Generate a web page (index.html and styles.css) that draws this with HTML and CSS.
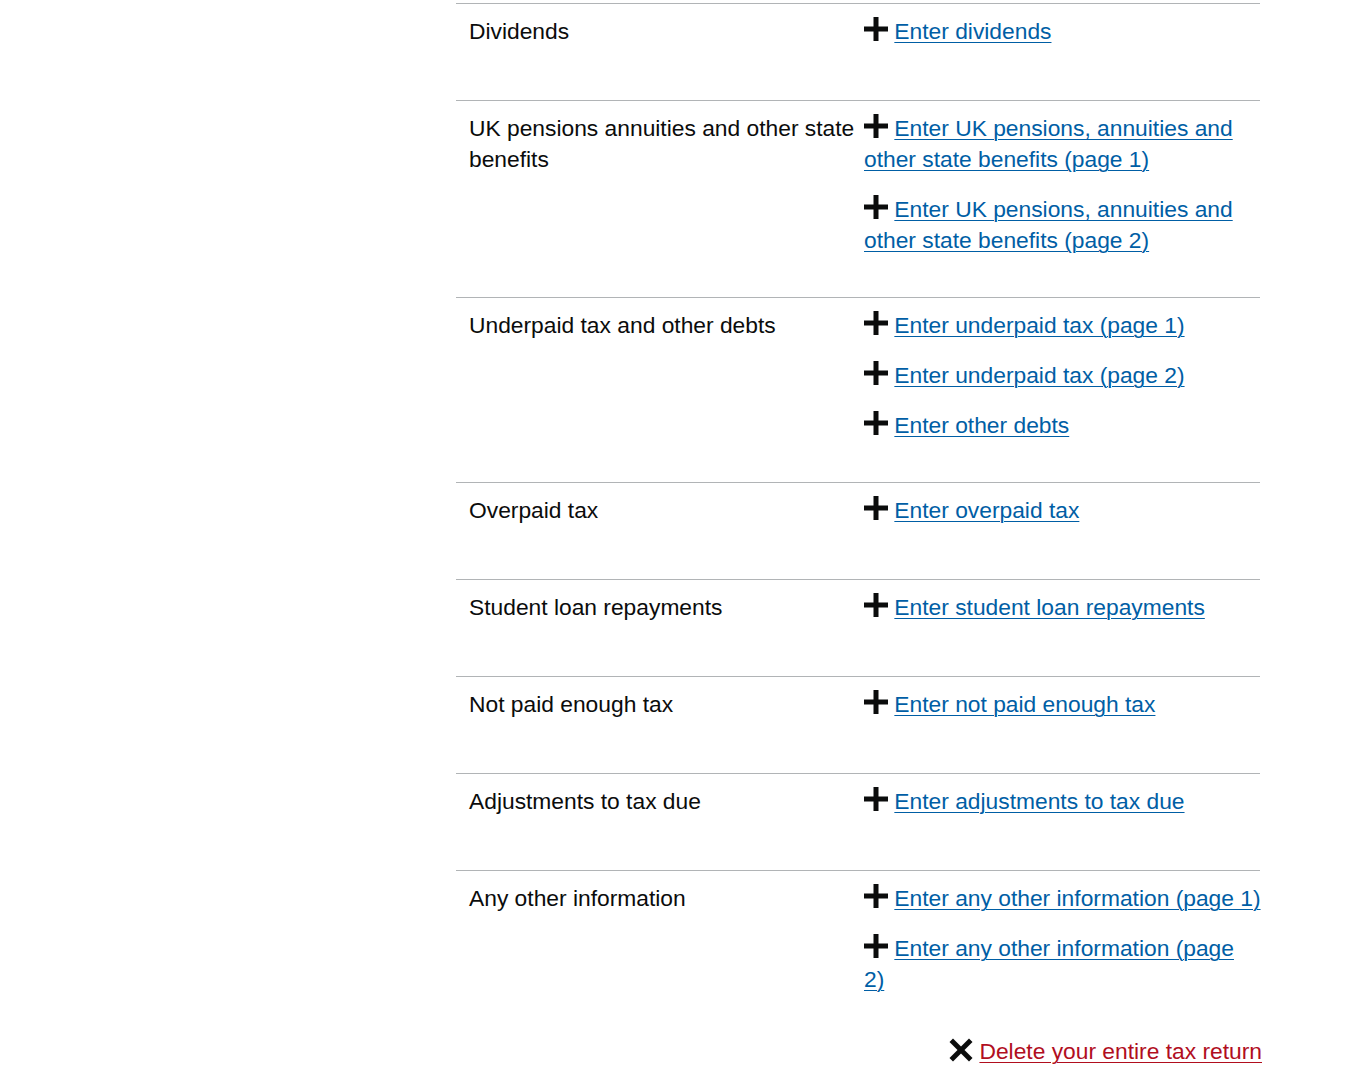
FILE: index.html
```html
<!DOCTYPE html>
<html lang="en">
<head>
    <meta charset="UTF-8">
    <meta name="viewport" content="width=device-width, initial-scale=1.0">
    <title>Your tax return</title>
    <link rel="stylesheet" href="styles.css">
</head>
<body>
    <div class="page">
        <dl class="summary-list">
            <div class="summary-row">
                <dt class="summary-key">Dividends</dt>
                <dd class="summary-value">
                    <p class="add-link"><svg class="icon-plus" viewBox="0 0 24 24"><path d="M9.5 0h5v9.5H24v5h-9.5V24h-5v-9.5H0v-5h9.5z"/></svg> <a href="#">Enter dividends</a></p>
                </dd>
            </div>
            <div class="summary-row">
                <dt class="summary-key">UK pensions annuities and other state benefits</dt>
                <dd class="summary-value">
                    <p class="add-link"><svg class="icon-plus" viewBox="0 0 24 24"><path d="M9.5 0h5v9.5H24v5h-9.5V24h-5v-9.5H0v-5h9.5z"/></svg> <a href="#">Enter UK pensions, annuities and other state benefits (page 1)</a></p>
                    <p class="add-link"><svg class="icon-plus" viewBox="0 0 24 24"><path d="M9.5 0h5v9.5H24v5h-9.5V24h-5v-9.5H0v-5h9.5z"/></svg> <a href="#">Enter UK pensions, annuities and other state benefits (page 2)</a></p>
                </dd>
            </div>
            <div class="summary-row">
                <dt class="summary-key">Underpaid tax and other debts</dt>
                <dd class="summary-value">
                    <p class="add-link"><svg class="icon-plus" viewBox="0 0 24 24"><path d="M9.5 0h5v9.5H24v5h-9.5V24h-5v-9.5H0v-5h9.5z"/></svg> <a href="#">Enter underpaid tax (page 1)</a></p>
                    <p class="add-link"><svg class="icon-plus" viewBox="0 0 24 24"><path d="M9.5 0h5v9.5H24v5h-9.5V24h-5v-9.5H0v-5h9.5z"/></svg> <a href="#">Enter underpaid tax (page 2)</a></p>
                    <p class="add-link"><svg class="icon-plus" viewBox="0 0 24 24"><path d="M9.5 0h5v9.5H24v5h-9.5V24h-5v-9.5H0v-5h9.5z"/></svg> <a href="#">Enter other debts</a></p>
                </dd>
            </div>
            <div class="summary-row">
                <dt class="summary-key">Overpaid tax</dt>
                <dd class="summary-value">
                    <p class="add-link"><svg class="icon-plus" viewBox="0 0 24 24"><path d="M9.5 0h5v9.5H24v5h-9.5V24h-5v-9.5H0v-5h9.5z"/></svg> <a href="#">Enter overpaid tax</a></p>
                </dd>
            </div>
            <div class="summary-row">
                <dt class="summary-key">Student loan repayments</dt>
                <dd class="summary-value">
                    <p class="add-link"><svg class="icon-plus" viewBox="0 0 24 24"><path d="M9.5 0h5v9.5H24v5h-9.5V24h-5v-9.5H0v-5h9.5z"/></svg> <a href="#">Enter student loan repayments</a></p>
                </dd>
            </div>
            <div class="summary-row">
                <dt class="summary-key">Not paid enough tax</dt>
                <dd class="summary-value">
                    <p class="add-link"><svg class="icon-plus" viewBox="0 0 24 24"><path d="M9.5 0h5v9.5H24v5h-9.5V24h-5v-9.5H0v-5h9.5z"/></svg> <a href="#">Enter not paid enough tax</a></p>
                </dd>
            </div>
            <div class="summary-row">
                <dt class="summary-key">Adjustments to tax due</dt>
                <dd class="summary-value">
                    <p class="add-link"><svg class="icon-plus" viewBox="0 0 24 24"><path d="M9.5 0h5v9.5H24v5h-9.5V24h-5v-9.5H0v-5h9.5z"/></svg> <a href="#">Enter adjustments to tax due</a></p>
                </dd>
            </div>
            <div class="summary-row">
                <dt class="summary-key">Any other information</dt>
                <dd class="summary-value">
                    <p class="add-link"><svg class="icon-plus" viewBox="0 0 24 24"><path d="M9.5 0h5v9.5H24v5h-9.5V24h-5v-9.5H0v-5h9.5z"/></svg> <a href="#">Enter any other information (page 1)</a></p>
                    <p class="add-link"><svg class="icon-plus" viewBox="0 0 24 24"><path d="M9.5 0h5v9.5H24v5h-9.5V24h-5v-9.5H0v-5h9.5z"/></svg> <a href="#">Enter any other information (page<br>2)</a></p>
                </dd>
            </div>
        </dl>
        <p class="delete-link"><svg class="icon-cross" viewBox="0 0 24 24"><path d="M4 0.5L12 8.5L20 0.5L23.5 4L15.5 12L23.5 20L20 23.5L12 15.5L4 23.5L0.5 20L8.5 12L0.5 4z"/></svg> <a href="#">Delete your entire tax return</a></p>
    </div>
</body>
</html>
```

FILE: styles.css
```css
body {
    margin: 0;
    background: #ffffff;
    color: #0b0c0c;
    font-family: "Liberation Sans", Arial, sans-serif;
    font-size: 22.8px;
    line-height: 31px;
}
.page {
    width: 806px;
    margin-left: 456px;
    padding-top: 3px;
}
.summary-list {
    margin: 0;
    width: 804px;
}
.summary-row {
    box-sizing: border-box;
    display: grid;
    grid-template-columns: 408px 404px;
    border-top: 1px solid #b1b4b6;
    min-height: 97px;
    padding-top: 12px;
    padding-bottom: 22px;
}
.summary-key {
    margin: 0;
    padding-left: 13px;
    padding-right: 4px;
}
.summary-value {
    margin: 0;
}
.add-link {
    margin: 0 0 19px 0;
}
a {
    color: #005ea5;
    text-decoration: underline;
    text-decoration-thickness: 1px;
    text-underline-offset: 3px;
}
.icon-plus {
    width: 24px;
    height: 24px;
    vertical-align: -2px;
    fill: #0b0c0c;
}
.delete-link {
    margin: 0;
    width: 806px;
    text-align: right;
}
.delete-link a {
    color: #b10e1e;
}
.icon-cross {
    width: 24px;
    height: 24px;
    vertical-align: -3px;
    fill: #0b0c0c;
}
```
